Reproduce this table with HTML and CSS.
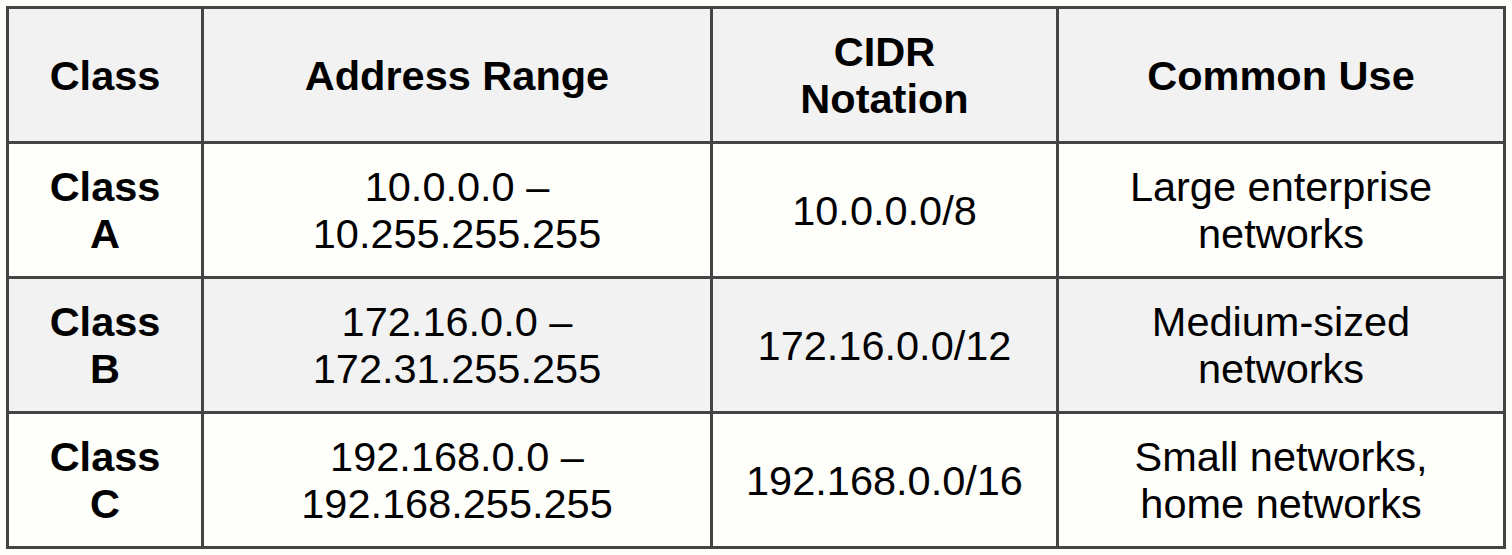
FILE: index.html
```html
<!DOCTYPE html>
<html lang="en">
<head>
    <meta charset="utf-8" />
    <title>Private IP Address Ranges</title>
    <link rel="stylesheet" href="styles.css">
</head>
<body>
    <table class="ip_table">
        <colgroup>
            <col class="col_class">
            <col class="col_range">
            <col class="col_cidr">
            <col class="col_use">
        </colgroup>
        <thead>
            <tr>
                <th>Class</th>
                <th>Address Range</th>
                <th>CIDR<br>Notation</th>
                <th>Common Use</th>
            </tr>
        </thead>
        <tbody>
            <tr>
                <td class="name">Class A</td>
                <td>10.0.0.0 – 10.255.255.255</td>
                <td>10.0.0.0/8</td>
                <td>Large enterprise networks</td>
            </tr>
            <tr class="shaded">
                <td class="name">Class B</td>
                <td>172.16.0.0 – 172.31.255.255</td>
                <td>172.16.0.0/12</td>
                <td>Medium-sized networks</td>
            </tr>
            <tr>
                <td class="name">Class C</td>
                <td>192.168.0.0 – 192.168.255.255</td>
                <td>192.168.0.0/16</td>
                <td>Small networks, home networks</td>
            </tr>
        </tbody>
    </table>
</body>
</html>
```

FILE: styles.css
```css
body {
    margin: 6px;
    background: #fefefb;
    font-family: "Liberation Sans", Arial, sans-serif;
    color: #000;
}

.ip_table {
    width: 1500px;
    table-layout: fixed;
    border-collapse: separate;
    border-spacing: 0;
    border-left: 3px solid #444;
    border-top: 3px solid #444;
    font-size: 41.5px;
    line-height: 47px;
}

.col_class { width: 195px; }
.col_range { width: 509px; }
.col_cidr { width: 346px; }
.col_use { width: 447px; }

th,
td {
    padding: 19px 30px;
    border-right: 3px solid #444;
    border-bottom: 3px solid #444;
    text-align: center;
    vertical-align: middle;
}

th {
    background: #f2f2f2;
    font-weight: bold;
}

td {
    font-weight: normal;
}

td.name {
    font-weight: bold;
}

.shaded td {
    background: #f2f2f2;
}
```
